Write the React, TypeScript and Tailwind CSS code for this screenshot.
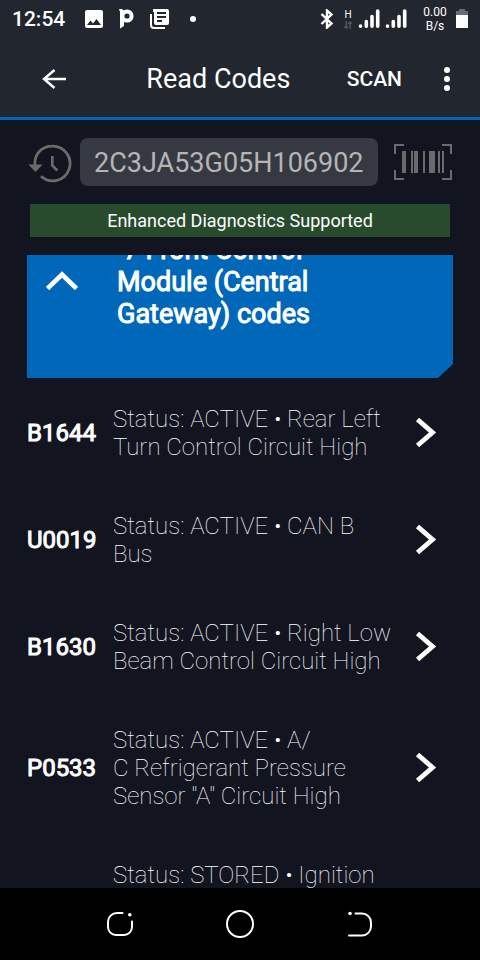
import { MdImage } from "react-icons/md";

const codes = [
  { code: "B1644", text: "Status: ACTIVE • Rear Left Turn Control Circuit High" },
  { code: "U0019", text: "Status: ACTIVE • CAN B Bus" },
  { code: "B1630", text: "Status: ACTIVE • Right Low Beam Control Circuit High" },
  { code: "P0533", text: "Status: ACTIVE • A/\nC\u00a0Refrigerant Pressure Sensor \"A\" Circuit High" },
  { code: "", text: "Status: STORED • Ignition\n\n\u00a0" },
];

function Signal() {
  return (
    <svg className="h-5 w-[22px]" viewBox="0 0 22 20" fill="none" stroke="#fff" strokeWidth="3.6" strokeLinecap="round">
      <path d="M2.500 17v.2M8.300 12.500v4.700M14 7.500v9.700M19.700 2v15.200" />
    </svg>
  );
}

function StatusBar() {
  return (
    <div className="flex h-[38px] items-center justify-between px-3">
      <div className="flex items-center">
        <span className="w-[70px] text-[21px] leading-6 font-medium">12:54</span>
        <MdImage className="h-6 w-6" />
        {/* P logo */}
        <svg className="ml-3 h-5 w-4" viewBox="0 0 16 20">
          <path d="M1 0h3l2 2v15l-4 2.500V3z" fill="#fff" />
          <circle cx="9" cy="7" r="4.600" fill="none" stroke="#fff" strokeWidth="4" />
        </svg>
        {/* news */}
        <svg className="ml-4 h-5 w-5" viewBox="0 0 20 20">
          <path d="M1 5v11a3 3 0 0 0 3 3h11" fill="none" stroke="#fff" strokeWidth="2" />
          <path
            fillRule="evenodd"
            fill="#fff"
            d="M3 0h14a2 2 0 0 1 2 2v12a2 2 0 0 1-2 2H6a2 2 0 0 1-2-2V3H3zM7 3v2h9V3zM7 7v2h9V7zM7 11v2h5v-2z"
          />
        </svg>
        <span className="ml-5 h-[6px] w-[6px] rounded-full bg-white" />
      </div>
      <div className="flex items-center">
        {/* bluetooth */}
        <svg className="h-5 w-[14px]" viewBox="0 0 14 20" fill="none" stroke="#fff" strokeWidth="2.400">
          <path d="M1.500 5 11.500 14.500 7 18.500V1.500l4.500 4L1.500 15" />
        </svg>
        <div className="ml-2 flex w-3 flex-col items-center">
          <span className="text-[10px] leading-3">H</span>
          <svg className="h-2 w-2" viewBox="0 0 8 8" fill="none" stroke="#555961" strokeWidth="1.400">
            <path d="M2.200 0v7M.5 5.500l1.700 1.700L3.900 5.500M6 8V1M4.300 2.700 6 1l1.700 1.700" />
          </svg>
        </div>
        <div className="ml-1 flex gap-[5px]">
          <Signal />
          <Signal />
        </div>
        <span className="ml-4 w-6 text-center text-[12px] leading-[14px]">0.00 B/s</span>
        <svg className="ml-[9px] h-5 w-3" viewBox="0 0 12 20">
          <path d="M0 2h3V0h6v2h3v4H0z" fill="#6a6c73" />
          <path d="M0 6h12v13H0z" fill="#fff" />
        </svg>
      </div>
    </div>
  );
}

function Header() {
  return (
    <header className="border-b-[3px] border-[#0067bb] bg-[#22262f]">
      <StatusBar />
      <div className="flex h-[79px] items-center pt-[2px]">
        <button aria-label="Back" className="ml-[42px]">
          <svg className="h-6 w-6" viewBox="0 0 24 24" fill="none" stroke="#fff" strokeWidth="2.400">
            <path d="M12.500 3 2 12l10.500 9M2 12h22" />
          </svg>
        </button>
        <h1 className="flex-1 pl-14 text-center text-[27px] leading-8">Read Codes</h1>
        <button className="ml-8 text-[21px] leading-6 font-medium">SCAN</button>
        <button aria-label="More" className="mr-[30px] ml-[42px] flex flex-col gap-[3px]">
          <span className="h-[6px] w-[6px] rounded-full bg-white" />
          <span className="h-[6px] w-[6px] rounded-full bg-white" />
          <span className="h-[6px] w-[6px] rounded-full bg-white" />
        </button>
      </div>
    </header>
  );
}

function VinRow() {
  return (
    <div className="flex items-center px-7">
      <button aria-label="History">
        <svg className="h-12 w-11" viewBox="0 0 44 48">
          <path d="M7 27C6 16 14 8.200 24 8.200a17.300 17.300 0 1 1-11 30" fill="none" stroke="#6b6b6b" strokeWidth="2.800" />
          <path d="M.5 26.500h14L7.500 34z" fill="#6b6b6b" />
          <path d="M24.300 18v9.500l5 5" fill="none" stroke="#6b6b6b" strokeWidth="2.600" />
        </svg>
      </button>
      <input
        aria-label="VIN"
        readOnly
        value="2C3JA53G05H106902"
        className="ml-2 h-12 min-w-0 flex-1 rounded-lg bg-[#373942] px-[14px] pt-[2px] text-[27px] text-[#b5b5b5]"
      />
      <button aria-label="Scan barcode" className="ml-4">
        <svg className="h-9 w-[58px]" viewBox="0 0 58 36">
          <path
            d="M10 1H1v9M48 1h9v9M1 26v9h9M57 26v9h-9"
            fill="none"
            stroke="#6b6b6b"
            strokeWidth="2"
          />
          <path
            d="M8 7h4v22H8zM17 7h2v22h-2zM20 7h4v22h-4zM29 7h2v22h-2zM35 7h6v22h-6zM44 7h2v22h-2zM48 7h2v22h-2z"
            fill="#6b6b6b"
          />
        </svg>
      </button>
    </div>
  );
}

function ModuleCard() {
  return (
    <button className="flex h-[123px] w-full items-end overflow-hidden bg-[#0067b9] pb-12 text-left [clip-path:polygon(0_0,100%_0,100%_calc(100%-14px),calc(100%-15px)_100%,0_100%)]">
      <svg className="mx-[19px] mb-10 h-5 w-8 shrink-0" viewBox="0 0 32 20" fill="none" stroke="#fff" strokeWidth="4.600">
        <path d="M1.500 18.500 16 4.500l14.500 14" />
      </svg>
      <span className="ml-5 max-w-[210px] text-[27px] leading-8 [-webkit-text-stroke:1px_#fff]">
        {"\u00a07 Front Control Module (Central Gateway) codes"}
      </span>
    </button>
  );
}

function NavBar() {
  return (
    <nav className="flex h-[72px] shrink-0 items-center justify-center gap-[92px] bg-black">
      <button aria-label="Recent apps">
        <svg className="h-7 w-7" viewBox="0 0 28 28" fill="none" stroke="#fff" strokeWidth="2" strokeLinecap="round">
          <path d="M16.500 3H11a9 9 0 0 0-9 9v5a8 8 0 0 0 8 8h8a8 8 0 0 0 8-8v-5.500" />
          <circle cx="23.800" cy="4.700" r="1.800" fill="#fff" stroke="none" />
        </svg>
      </button>
      <button aria-label="Home">
        <svg className="h-7 w-7" viewBox="0 0 28 28" fill="none" stroke="#fff" strokeWidth="2">
          <circle cx="14" cy="14" r="13" />
        </svg>
      </button>
      <button aria-label="Back">
        <svg className="h-7 w-7" viewBox="0 0 28 28" fill="none" stroke="#fff" strokeWidth="2" strokeLinecap="round">
          <path d="M9.500 3.500H16a9 9 0 0 1 9 9v4a9 9 0 0 1-9 9H3" />
          <circle cx="4" cy="3.500" r="1.800" fill="#fff" stroke="none" />
        </svg>
      </button>
    </nav>
  );
}

export default function App() {
  return (
    <div className="flex h-screen flex-col bg-[#12141f] font-['Roboto',sans-serif] text-white">
      <Header />
      <main className="flex min-h-0 flex-1 flex-col gap-[18px] pt-[18px]">
        <VinRow />
        <p className="mx-[30px] bg-[#284b2d] pt-px text-center text-[18px] leading-8">
          Enhanced Diagnostics Supported
        </p>

        {/* Codes */}
        <div className="min-h-0 flex-1 overflow-hidden px-[27px]">
          <ModuleCard />
          <ul>
            {codes.map(({ code, text }) => (
              <li key={text}>
                <button className="flex w-full items-center pt-[27px] pb-6 text-left">
                  <span className="w-[86px] shrink-0 text-[24px] leading-7 [-webkit-text-stroke:1px_#fff]">
                    {code}
                  </span>
                  <span className="flex-1 text-[24px] leading-7 font-thin whitespace-pre-line">{text}</span>
                  <svg
                    className="mr-4 ml-4 h-[30px] w-[22px] shrink-0"
                    viewBox="0 0 22 30"
                    fill="none"
                    stroke="#fff"
                    strokeWidth="4.800"
                  >
                    <path d="M2.500 1.500 17.500 14.500 2.500 27.500" />
                  </svg>
                </button>
              </li>
            ))}
          </ul>
        </div>
      </main>
      <NavBar />
    </div>
  );
}
